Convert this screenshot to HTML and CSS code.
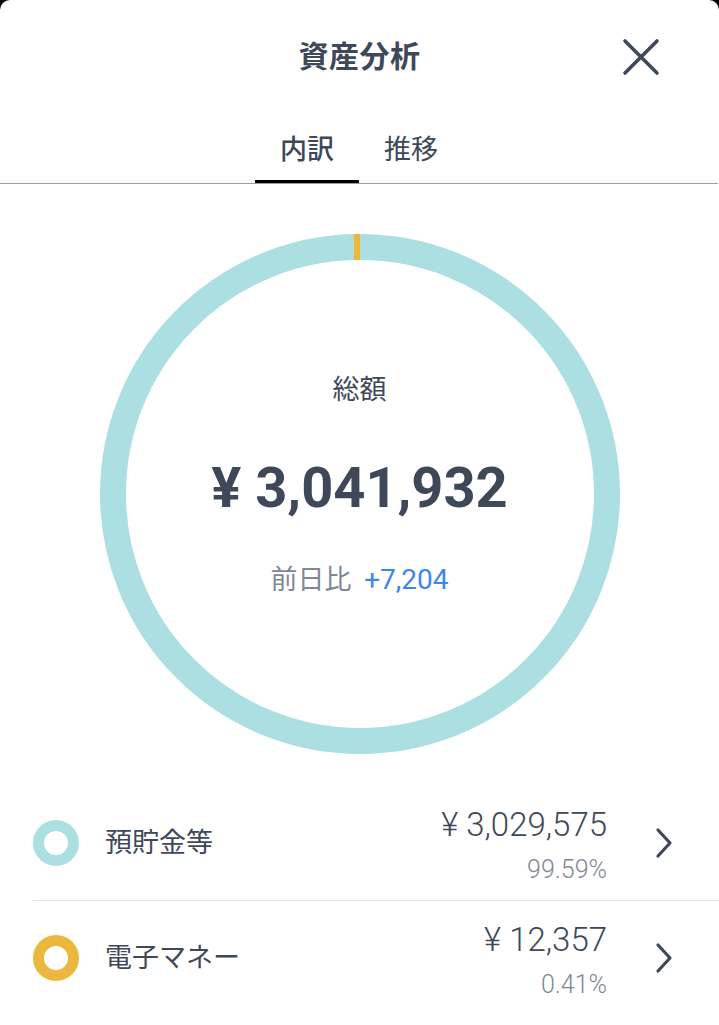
FILE: index.html
```html
<!DOCTYPE html>
<html lang="ja">
<head>
    <meta charset="UTF-8">
    <meta name="viewport" content="width=device-width, initial-scale=1.0">
    <title>資産分析</title>
    <link rel="stylesheet" href="styles.css">
</head>
<body>
    <div class="sheet">
        <header class="titlebar">
            <span></span>
            <h1>資産分析</h1>
            <button class="close" aria-label="閉じる">
                <svg width="40" height="40" viewBox="0 0 40 40">
                    <path d="M4 4 L36 36 M36 4 L4 36" stroke="#3e4859" stroke-width="3.6" stroke-linecap="round" fill="none"/>
                </svg>
            </button>
        </header>
        <nav class="tabs">
            <a class="tab active">内訳</a>
            <a class="tab">推移</a>
        </nav>
        <section class="chart">
            <div class="donut">
                <svg class="ring" width="520" height="520" viewBox="0 0 520 520">
                    <g transform="rotate(-90 260 260)">
                        <circle cx="260" cy="260" r="247" fill="none" stroke="#acdfe2" stroke-width="26"
                                pathLength="100" stroke-dasharray="99.59 100"/>
                        <circle cx="260" cy="260" r="247" fill="none" stroke="#ecb73e" stroke-width="26"
                                pathLength="100" stroke-dasharray="0.41 100" stroke-dashoffset="-99.59"/>
                    </g>
                </svg>
                <div class="total">
                    <div class="total-label">総額</div>
                    <div class="total-amount">¥ 3,041,932</div>
                    <div class="total-diff">前日比 <span class="plus">+7,204</span></div>
                </div>
            </div>
        </section>
        <ul class="list">
            <li class="row">
                <span class="dot dot-deposit"></span>
                <span class="name">預貯金等</span>
                <span class="amounts">
                    <span class="amount">¥ 3,029,575</span>
                    <span class="ratio">99.59%</span>
                </span>
                <svg class="chevron" width="24" height="32" viewBox="0 0 24 32">
                    <path d="M6 3 L18 16 L6 29" stroke="#3e4859" stroke-width="3.2" stroke-linecap="round" stroke-linejoin="round" fill="none"/>
                </svg>
            </li>
            <li class="row">
                <span class="dot dot-emoney"></span>
                <span class="name">電子マネー</span>
                <span class="amounts">
                    <span class="amount">¥ 12,357</span>
                    <span class="ratio">0.41%</span>
                </span>
                <svg class="chevron" width="24" height="32" viewBox="0 0 24 32">
                    <path d="M6 3 L18 16 L6 29" stroke="#3e4859" stroke-width="3.2" stroke-linecap="round" stroke-linejoin="round" fill="none"/>
                </svg>
            </li>
        </ul>
    </div>
</body>
</html>
```

FILE: styles.css
```css
:root {
    --text-color: #3e4859;
    --sub-color: #7f8794;
    --blue: #3d86f2;
    --line-color: #e3e5e9;
}
body {
    margin: 0;
    background: #000;
    font-family: Roboto, "Noto Sans CJK JP", sans-serif;
    color: var(--text-color);
}
.sheet {
    background: #fff;
    border-radius: 10px 10px 0 0;
    min-height: 100vh;
    overflow: hidden;
}
.titlebar {
    height: 114px;
    display: grid;
    grid-template-columns: 1fr auto 1fr;
    align-items: center;
}
.titlebar h1 {
    margin: 0;
    font-size: 30px;
    font-weight: 700;
    line-height: 40px;
    letter-spacing: 0.5px;
}
.close {
    justify-self: end;
    margin-right: 58px;
    padding: 0;
    border: 0;
    background: none;
    width: 40px;
    height: 40px;
    display: flex;
}
.tabs {
    height: 69px;
    display: flex;
    justify-content: center;
    border-bottom: 1px solid #989ea7;
    margin-right: 1px;
}
.tab {
    width: 104px;
    box-sizing: border-box;
    padding-top: 18px;
    font-size: 27px;
    line-height: 36px;
    text-align: center;
    border-bottom: 3px solid transparent;
}
.tab.active {
    font-weight: 500;
    border-bottom-color: #000;
}
.chart {
    padding-top: 50px;
    display: flex;
    justify-content: center;
}
.donut {
    display: grid;
}
.ring,
.total {
    grid-area: 1 / 1;
}
.total {
    padding-top: 138px;
    text-align: center;
}
.total-label {
    font-size: 27px;
    line-height: 36px;
}
.total-amount {
    margin-top: 47px;
    font-size: 56px;
    font-weight: 700;
    line-height: 66px;
}
.total-diff {
    margin-top: 41px;
    font-size: 27px;
    line-height: 36px;
    color: var(--sub-color);
}
.plus {
    color: var(--blue);
    margin-left: 6px;
    font-size: 28px;
}
.list {
    list-style: none;
    margin: 32px 0 0;
    padding: 0;
}
.row {
    height: 114px;
    box-sizing: border-box;
    margin-left: 33px;
    padding-right: 43px;
    display: flex;
    align-items: center;
}
.row + .row {
    border-top: 1px solid var(--line-color);
}
.dot {
    width: 46px;
    height: 46px;
    box-sizing: border-box;
    border-radius: 50%;
    border: 11px solid;
}
.dot-deposit {
    border-color: #acdfe2;
}
.dot-emoney {
    border-color: #ecb73e;
}
.name {
    flex: 1;
    margin-left: 26px;
    font-size: 27px;
    line-height: 36px;
}
.amounts {
    display: flex;
    flex-direction: column;
    align-items: flex-end;
    margin-top: 4px;
}
.amount {
    font-size: 33px;
    font-weight: 300;
    line-height: 36px;
}
.ratio {
    margin-top: 14px;
    font-size: 25px;
    font-weight: 300;
    line-height: 26px;
    color: var(--sub-color);
}
.chevron {
    margin-left: 45px;
}
```
